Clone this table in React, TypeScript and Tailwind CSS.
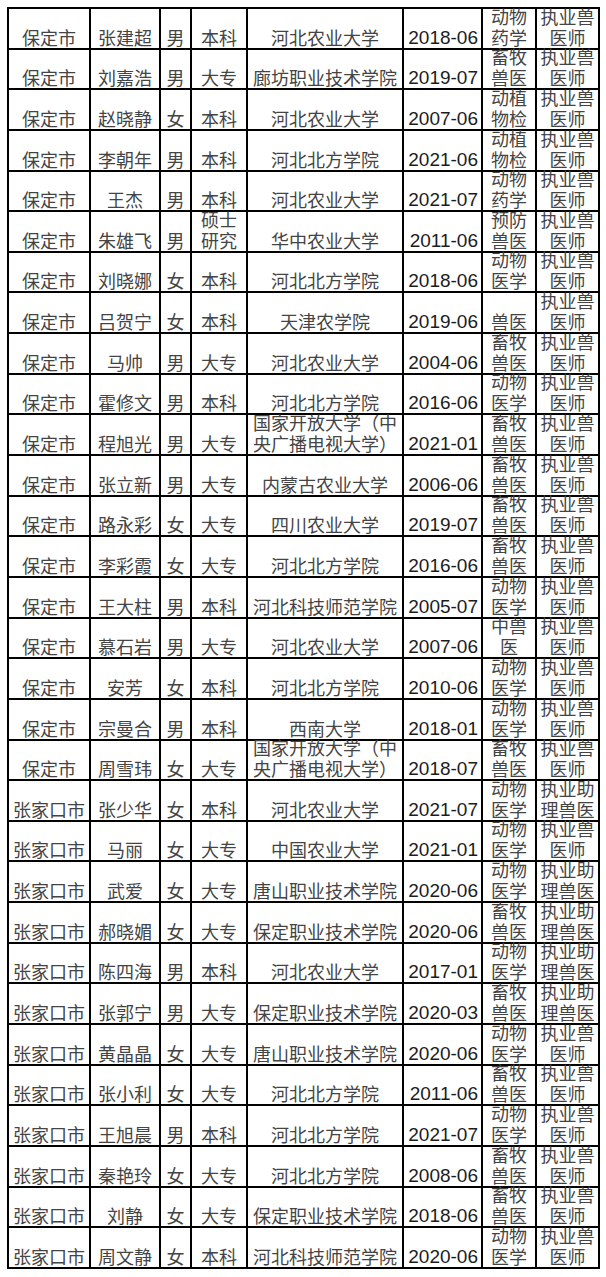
type Row = [string, string, string, string, string, string, string, string];

const rows: Row[] = [
  ['保定市', '张建超', '男', '本科', '河北农业大学', '2018-06', '动物\n药学', '执业兽\n医师'],
  ['保定市', '刘嘉浩', '男', '大专', '廊坊职业技术学院', '2019-07', '畜牧\n兽医', '执业兽\n医师'],
  ['保定市', '赵晓静', '女', '本科', '河北农业大学', '2007-06', '动植\n物检', '执业兽\n医师'],
  ['保定市', '李朝年', '男', '本科', '河北北方学院', '2021-06', '动植\n物检', '执业兽\n医师'],
  ['保定市', '王杰', '男', '本科', '河北农业大学', '2021-07', '动物\n药学', '执业兽\n医师'],
  ['保定市', '朱雄飞', '男', '硕士\n研究', '华中农业大学', '2011-06', '预防\n兽医', '执业兽\n医师'],
  ['保定市', '刘晓娜', '女', '本科', '河北北方学院', '2018-06', '动物\n医学', '执业兽\n医师'],
  ['保定市', '吕贺宁', '女', '本科', '天津农学院', '2019-06', '兽医', '执业兽\n医师'],
  ['保定市', '马帅', '男', '大专', '河北农业大学', '2004-06', '畜牧\n兽医', '执业兽\n医师'],
  ['保定市', '霍修文', '男', '本科', '河北北方学院', '2016-06', '动物\n医学', '执业兽\n医师'],
  ['保定市', '程旭光', '男', '大专', '国家开放大学（中\n央广播电视大学）', '2021-01', '畜牧\n兽医', '执业兽\n医师'],
  ['保定市', '张立新', '男', '大专', '内蒙古农业大学', '2006-06', '畜牧\n兽医', '执业兽\n医师'],
  ['保定市', '路永彩', '女', '大专', '四川农业大学', '2019-07', '畜牧\n兽医', '执业兽\n医师'],
  ['保定市', '李彩霞', '女', '大专', '河北北方学院', '2016-06', '畜牧\n兽医', '执业兽\n医师'],
  ['保定市', '王大柱', '男', '本科', '河北科技师范学院', '2005-07', '动物\n医学', '执业兽\n医师'],
  ['保定市', '慕石岩', '男', '大专', '河北农业大学', '2007-06', '中兽\n医', '执业兽\n医师'],
  ['保定市', '安芳', '女', '本科', '河北北方学院', '2010-06', '动物\n医学', '执业兽\n医师'],
  ['保定市', '宗曼合', '男', '本科', '西南大学', '2018-01', '动物\n医学', '执业兽\n医师'],
  ['保定市', '周雪玮', '女', '大专', '国家开放大学（中\n央广播电视大学）', '2018-07', '畜牧\n兽医', '执业兽\n医师'],
  ['张家口市', '张少华', '女', '本科', '河北农业大学', '2021-07', '动物\n医学', '执业助\n理兽医'],
  ['张家口市', '马丽', '女', '大专', '中国农业大学', '2021-01', '动物\n医学', '执业兽\n医师'],
  ['张家口市', '武爱', '女', '大专', '唐山职业技术学院', '2020-06', '动物\n医学', '执业助\n理兽医'],
  ['张家口市', '郝晓媚', '女', '大专', '保定职业技术学院', '2020-06', '畜牧\n兽医', '执业助\n理兽医'],
  ['张家口市', '陈四海', '男', '本科', '河北农业大学', '2017-01', '动物\n医学', '执业助\n理兽医'],
  ['张家口市', '张郭宁', '男', '大专', '保定职业技术学院', '2020-03', '畜牧\n兽医', '执业助\n理兽医'],
  ['张家口市', '黄晶晶', '女', '大专', '唐山职业技术学院', '2020-06', '动物\n医学', '执业兽\n医师'],
  ['张家口市', '张小利', '女', '大专', '河北北方学院', '2011-06', '畜牧\n兽医', '执业兽\n医师'],
  ['张家口市', '王旭晨', '男', '本科', '河北北方学院', '2021-07', '动物\n医学', '执业兽\n医师'],
  ['张家口市', '秦艳玲', '女', '大专', '河北北方学院', '2008-06', '畜牧\n兽医', '执业兽\n医师'],
  ['张家口市', '刘静', '女', '大专', '保定职业技术学院', '2018-06', '畜牧\n兽医', '执业兽\n医师'],
  ['张家口市', '周文静', '女', '本科', '河北科技师范学院', '2020-06', '动物\n医学', '执业兽\n医师'],
];

function TextCell({ text }: { text: string }) {
  return (
    <div className="flex min-w-0 flex-col items-center justify-end bg-white text-center">
      {text.split('\n').map((line) => (
        <span key={line} className="whitespace-nowrap leading-[21px]">
          {line}
        </span>
      ))}
    </div>
  );
}

function DateCell({ text }: { text: string }) {
  return (
    <div className="flex items-end justify-end bg-white pr-[3px] font-['Liberation_Sans',Arial,sans-serif] text-[19px] leading-[21px] text-[#1c1c1c]">
      {text}
    </div>
  );
}

export default function App() {
  return (
    <div className="min-h-screen bg-white pl-[7px] pt-[7px] font-['Noto_Sans_CJK_SC','Noto_Sans',sans-serif] text-[18px] text-[#444]">
      <div className="grid w-fit auto-rows-[38.65px] grid-cols-[80px_68px_29px_54px_154px_77px_52px_61px] gap-[2px] bg-black p-[2px]">
        {rows.map((row, i) => (
          <div key={`row-${i}`} className="contents">
            <TextCell text={row[0]} />
            <TextCell text={row[1]} />
            <TextCell text={row[2]} />
            <TextCell text={row[3]} />
            <TextCell text={row[4]} />
            <DateCell text={row[5]} />
            <TextCell text={row[6]} />
            <TextCell text={row[7]} />
          </div>
        ))}
      </div>
    </div>
  );
}
